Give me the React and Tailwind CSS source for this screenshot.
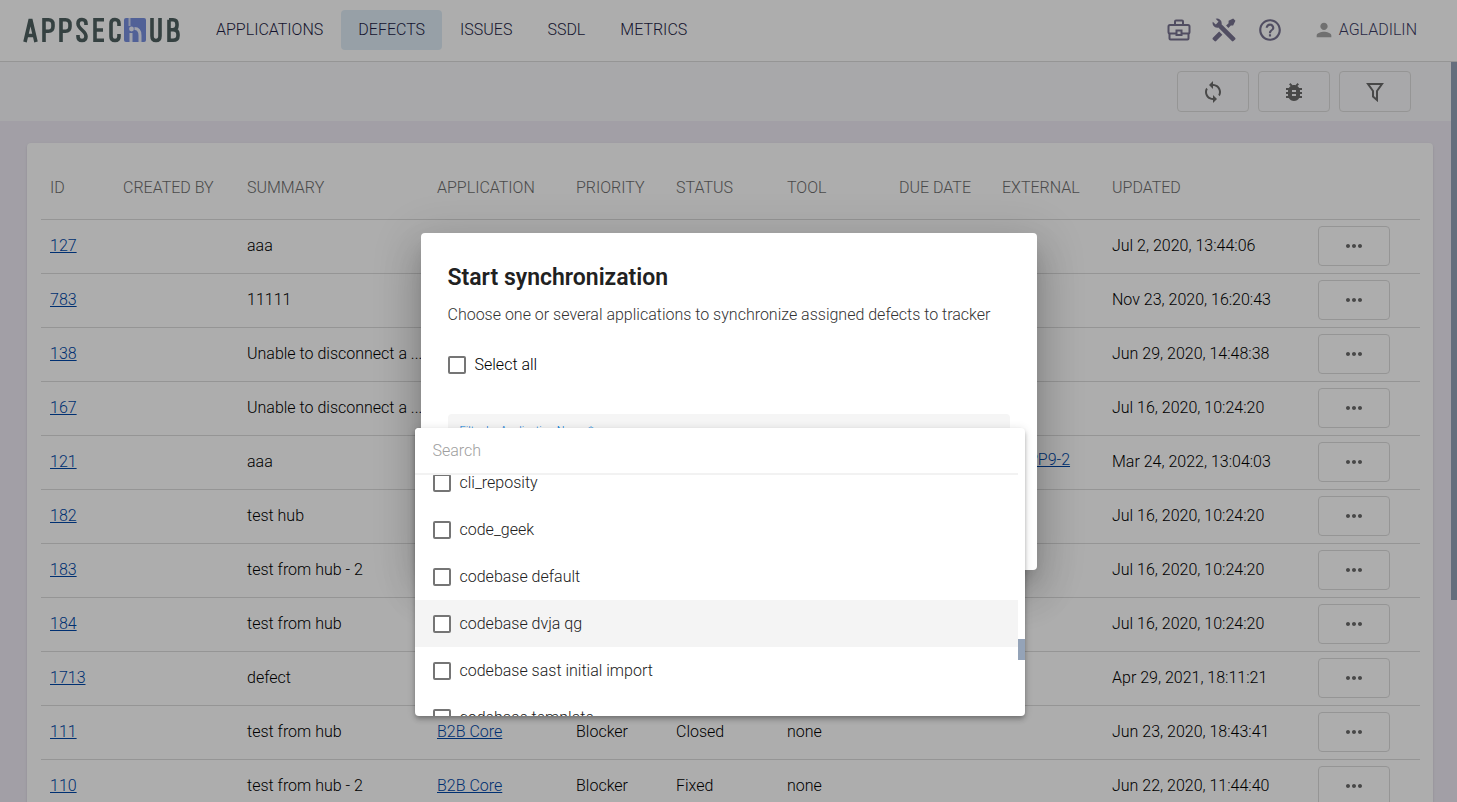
import { MdSync, MdBugReport, MdMoreHoriz, MdPerson, MdHelpOutline } from "react-icons/md";

const nav = ["APPLICATIONS", "DEFECTS", "ISSUES", "SSDL", "METRICS"];

const columns = [
  ["ID", "w-[73px]"],
  ["CREATED BY", "w-[124px]"],
  ["SUMMARY", "w-[190px]"],
  ["APPLICATION", "w-[139px]"],
  ["PRIORITY", "w-[100px]"],
  ["STATUS", "w-[111px]"],
  ["TOOL", "w-[112px]"],
  ["DUE DATE", "w-[103px]"],
  ["EXTERNAL", "w-[110px]"],
  ["UPDATED", "w-[206px]"],
];

const defects = [
  { id: "127", summary: "aaa", updated: "Jul 2, 2020, 13:44:06" },
  { id: "783", summary: "11111", updated: "Nov 23, 2020, 16:20:43" },
  { id: "138", summary: "Unable to disconnect a ...", updated: "Jun 29, 2020, 14:48:38" },
  { id: "167", summary: "Unable to disconnect a ...", updated: "Jul 16, 2020, 10:24:20" },
  { id: "121", summary: "aaa", external: "APP9-2", updated: "Mar 24, 2022, 13:04:03" },
  { id: "182", summary: "test hub", updated: "Jul 16, 2020, 10:24:20" },
  { id: "183", summary: "test from hub - 2", updated: "Jul 16, 2020, 10:24:20" },
  { id: "184", summary: "test from hub", updated: "Jul 16, 2020, 10:24:20" },
  { id: "1713", summary: "defect", updated: "Apr 29, 2021, 18:11:21" },
  { id: "111", summary: "test from hub", app: "B2B Core", priority: "Blocker", status: "Closed", tool: "none", updated: "Jun 23, 2020, 18:43:41" },
  { id: "110", summary: "test from hub - 2", app: "B2B Core", priority: "Blocker", status: "Fixed", tool: "none", updated: "Jun 22, 2020, 11:44:40" },
];

const options = [
  "cli_reposity",
  "code_geek",
  "codebase default",
  "codebase dvja qg",
  "codebase sast initial import",
  "codebase template",
];

const box = "size-[18px] shrink-0 appearance-none rounded-[2px] border-2 border-[#757575] bg-white";
const outline = "flex w-[72px] items-center justify-center rounded-[4px] border border-[#dcdcdc] text-[#6b6b6b]";
const link = "text-[#0048a8] underline";

function Logo() {
  return (
    <svg viewBox="0 0 158 26" className="h-[26px] w-[158px]" role="img" aria-label="AppSec Hub" fill="none" stroke="#4e6060" strokeWidth="3.6">
      <path d="M2 25 7 3.5h1L13 25M4 18.5h7" />
      <path d="M21 25V2.8h4.5q4.5 0 4.5 4.7v2q0 4.700-4.5 4.700H21M38 25V2.800h4.500q4.500 0 4.500 4.700v2q0 4.700-4.500 4.700H38" />
      <path d="M63 8V6.500q0-4-4-4t-4 4q0 3 4 6.500t4 6.500q0 4-4 4t-4-4V18" />
      <path d="M81 2.800h-9V23.200h9M72 13h8" />
      <path d="M96 9V6.500q0-4-4-4t-4 4v13q0 4 4 4t4-4V17" />
      <rect x="101" y="1" width="22" height="24" rx="2" fill="#788fdf" stroke="none" />
      <path d="M106.500 1v8" stroke="#d5dcf5" strokeWidth="2" />
      <path d="M108 25V16" stroke="#eef1fc" strokeWidth="3" />
      <circle cx="108.500" cy="12" r="2.400" fill="#eef1fc" stroke="none" />
      <path d="M111.500 11.500q5.500 0 5.500 7V25" stroke="#eef1fc" strokeWidth="3" />
      <path d="M129 1v18q0 4.500 4 4.500t4-4.500V1" />
      <path d="M146 2.800v20.400h4q5 0 5-4.500v-1.500q0-4.500-5-4.500h-4M146 2.800h4q4 0 4 4.200v1.500q0 4.200-4 4.200" />
    </svg>
  );
}

function Briefcase() {
  return (
    <svg viewBox="0 0 24 22" className="h-[22px] w-6" fill="none" stroke="currentColor" strokeWidth="2" aria-hidden="true">
      <path d="M8 6V2.500q0-1 1-1h6q1 0 1 1V6" />
      <rect x="1.500" y="6" width="21" height="8.500" rx="1.500" />
      <path d="M2.500 14.500v5q0 1 1 1h17q1 0 1-1v-5" />
      <rect x="9.500" y="11.500" width="5" height="4.500" fill="#fff" />
    </svg>
  );
}

function Tools() {
  return (
    <svg viewBox="1.500 1.500 21 21" className="size-6" fill="currentColor" aria-hidden="true">
      <path d="M21.710 20.290 20.290 21.710a1 1 0 0 1-1.410 0L7 9.850A3.810 3.810 0 0 1 6 10 4 4 0 0 1 2.220 4.700L4.760 7.240 5.290 6.710 6.710 5.290 7.240 4.760 4.700 2.220A4 4 0 0 1 10 6 3.810 3.810 0 0 1 9.850 7L21.710 18.880a1 1 0 0 1 0 1.410zM2.290 18.880a1 1 0 0 0 0 1.410l1.420 1.420a1 1 0 0 0 1.410 0l5.470-5.460-2.830-2.830zM20 2l-4 2v2l-2.170 2.170 2 2L18 8h2l2-4z" />
    </svg>
  );
}

function Funnel() {
  return (
    <svg viewBox="0 0 18 20" className="h-5 w-[18px]" fill="none" stroke="currentColor" strokeWidth="2" aria-hidden="true">
      <path d="M2 2h14l-5 7v9l-4-3.500V9z" />
    </svg>
  );
}

export default function App() {
  return (
    <div className="relative h-screen overflow-hidden bg-[#efebf5] font-['Roboto',sans-serif] text-base font-light text-black">
      <header className="flex h-[62px] items-center border-b border-[#dcdcdc] bg-white pr-10 pb-[2px] pl-[23px]">
        <Logo />
        <nav className="ml-[18px] flex gap-px">
          {nav.map((item) => (
            <a key={item} href="#" className={`flex h-10 items-center rounded-[4px] px-[17px] text-[#1e1e46] ${item === "DEFECTS" ? "bg-[#dfecf7]" : ""}`}>
              {item}
            </a>
          ))}
        </nav>
        <div className="ml-auto flex items-center gap-[21px] text-[#787391]">
          <button aria-label="Portfolio"><Briefcase /></button>
          <button aria-label="Tools"><Tools /></button>
          <button aria-label="Help"><MdHelpOutline size={26} /></button>
          <button className="ml-[9px] flex items-center gap-1 text-[#3c3c64]">
            <MdPerson size={22} className="text-[#a5a5a5]" />
            AGLADILIN
          </button>
        </div>
      </header>

      <div className="flex h-[59px] items-center justify-end gap-[9px] bg-[#f8f8fb] pr-[46px]">
        <button aria-label="Synchronize" className={`${outline} h-[41px]`}><MdSync size={24} /></button>
        <button aria-label="Defects" className={`${outline} h-[41px]`}><MdBugReport size={24} /></button>
        <button aria-label="Filter" className={`${outline} h-[41px]`}><Funnel /></button>
      </div>

      <main className="mt-[22px] mr-6 ml-[27px] rounded-[4px] bg-white pr-[13px] pl-[14px] shadow-sm">
        <table className="w-full table-fixed border-collapse text-left">
          <thead>
            <tr className="h-[76px] border-b border-[#dcdcdc] text-[#6e6e6e]">
              {columns.map(([name, width]) => (
                <th key={name} className={`${width} pt-[14px] pb-0 pl-[9px] font-light whitespace-nowrap`}>{name}</th>
              ))}
              <th aria-label="Actions" />
            </tr>
          </thead>
          <tbody>
            {defects.map((d) => (
              <tr key={d.id} className="h-[54px] border-b border-[#dcdcdc]">
                <td className="pl-[9px]"><a href="#" className={link}>{d.id}</a></td>
                <td />
                <td className="pl-[9px] whitespace-nowrap">{d.summary}</td>
                <td className="pl-[9px]">{d.app && <a href="#" className={link}>{d.app}</a>}</td>
                <td className="pl-[9px]">{d.priority}</td>
                <td className="pl-[9px]">{d.status}</td>
                <td className="pl-[9px]">{d.tool}</td>
                <td />
                <td className="pb-1 pl-[25px]">{d.external && <a href="#" className={link}>{d.external}</a>}</td>
                <td className="pl-[9px] whitespace-nowrap">{d.updated}</td>
                <td className="pl-[9px]">
                  <button aria-label={`Actions for ${d.id}`} className={`${outline} h-10`}><MdMoreHoriz size={24} /></button>
                </td>
              </tr>
            ))}
          </tbody>
        </table>
      </main>

      <div className="absolute top-[62px] right-0 h-[538px] w-[6px] bg-[#94a3b8]" />
      <div className="absolute inset-0 bg-black/32" />

      <div className="absolute inset-0 flex items-center justify-center">
        <section role="dialog" aria-labelledby="sync-title" className="relative h-[337px] w-[616px] rounded-[4px] bg-white px-[27px] pt-[29px] shadow-[0_11px_15px_-7px_rgba(0,0,0,.2),0_24px_38px_3px_rgba(0,0,0,.14),0_9px_46px_8px_rgba(0,0,0,.12)]">
          <h2 id="sync-title" className="text-[23px] leading-8 font-semibold text-[#212121]">Start synchronization</h2>
          <p className="mt-[9px] leading-6 text-[#333333]">Choose one or several applications to synchronize assigned defects to tracker</p>
          <label className="mt-[26px] flex items-center gap-[9px]">
            <input type="checkbox" className={box} />
            Select all
          </label>
          <div className="mt-[37px] h-14 rounded-t-[4px] bg-[#f5f5f5] px-3 pt-[9px] text-[11px] leading-4 text-[#0078d7]">Filter by Application Name *</div>

          <div className="absolute top-[195px] -left-[6px] flex h-[288px] w-[610px] flex-col overflow-hidden rounded-[4px] bg-white text-[#212121] shadow-[0_2px_4px_-1px_rgba(0,0,0,.2),0_4px_5px_rgba(0,0,0,.14),0_1px_10px_rgba(0,0,0,.12)]">
            <input aria-label="Search" placeholder="Search" className="relative mr-[7px] h-[47px] shrink-0 border-b-2 border-[#f2f2f2] bg-white px-[18px] placeholder:text-[#9e9e9e]" />
            <ul className="-mt-4 mr-[7px]">
              {options.map((name) => (
                <li key={name} className={name === "codebase dvja qg" ? "bg-[#f4f4f4]" : ""}>
                  <label className="flex h-[47px] items-center gap-[9px] px-[18px] pt-[2px]">
                    <input type="checkbox" className={box} />
                    {name}
                  </label>
                </li>
              ))}
            </ul>
            <div className="absolute top-[211px] right-0 h-[21px] w-[7px] bg-[#94a3b8]" />
          </div>
        </section>
      </div>
    </div>
  );
}
